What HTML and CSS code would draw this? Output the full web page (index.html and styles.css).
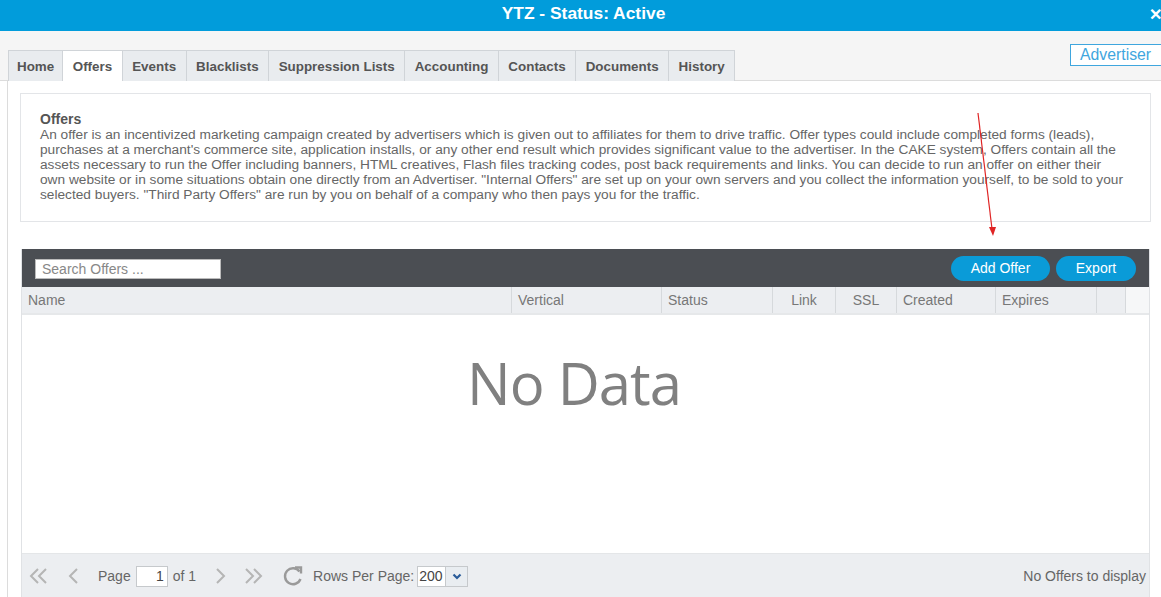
FILE: index.html
```html
<!DOCTYPE html>
<html lang="en">
<head>
    <meta charset="UTF-8">
    <title>YTZ - Status: Active</title>
    <link rel="stylesheet" href="styles.css">
</head>
<body>
    <div class="titlebar">
        <span class="title">YTZ - Status: Active</span>
        <span class="close">&#x2715;</span>
    </div>

    <div class="tabstrip">
        <ul class="tabs">
            <li class="tab">Home</li>
            <li class="tab active">Offers</li>
            <li class="tab">Events</li>
            <li class="tab">Blacklists</li>
            <li class="tab">Suppression Lists</li>
            <li class="tab">Accounting</li>
            <li class="tab">Contacts</li>
            <li class="tab">Documents</li>
            <li class="tab">History</li>
        </ul>
        <div class="role-box">Advertiser</div>
    </div>

    <div class="panel">
        <div class="intro">
            <h4>Offers</h4>
            <p>An offer is an incentivized marketing campaign created by advertisers which is given out to affiliates for them to drive traffic. Offer types could include completed forms (leads), purchases at a merchant's commerce site, application installs, or any other end result which provides significant value to the advertiser. In the CAKE system, Offers contain all the assets necessary to run the Offer including banners, HTML creatives, Flash files tracking codes, post back requirements and links. You can decide to run an offer on either their own website or in some situations obtain one directly from an Advertiser. "Internal Offers" are set up on your own servers and you collect the information yourself, to be sold to your selected buyers. "Third Party Offers" are run by you on behalf of a company who then pays you for the traffic.</p>
        </div>

        <div class="grid">
            <div class="grid-toolbar">
                <input class="search" type="text" placeholder="Search Offers ...">
                <div class="actions">
                    <button class="btn btn-add">Add Offer</button>
                    <button class="btn btn-export">Export</button>
                </div>
            </div>

            <div class="grid-head">
                <div class="col col-name">Name</div>
                <div class="col col-vertical">Vertical</div>
                <div class="col col-status">Status</div>
                <div class="col col-link center">Link</div>
                <div class="col col-ssl center">SSL</div>
                <div class="col col-created">Created</div>
                <div class="col col-expires">Expires</div>
                <div class="col col-blank"></div>
            </div>

            <div class="grid-body">
                <div class="no-data">No Data</div>
            </div>

            <div class="pager">
                <div class="pager-left">
                    <svg class="nav-icon first" width="22" height="20" viewBox="0 0 22 20"><polyline points="10,3 3,10 10,17" /><polyline points="18,3 11,10 18,17" /></svg>
                    <svg class="nav-icon prev" width="14" height="20" viewBox="0 0 14 20"><polyline points="11,3 4,10 11,17" /></svg>
                    <span class="pager-label">Page</span>
                    <input class="page-input" type="text" value="1">
                    <span class="pager-of">of 1</span>
                    <svg class="nav-icon next" width="14" height="20" viewBox="0 0 14 20"><polyline points="3,3 10,10 3,17" /></svg>
                    <svg class="nav-icon last" width="22" height="20" viewBox="0 0 22 20"><polyline points="4,3 11,10 4,17" /><polyline points="12,3 19,10 12,17" /></svg>
                    <svg class="refresh" width="22" height="22" viewBox="0 0 22 22"><path d="M17.5 6.5 A8 8 0 1 0 18.5 14" /><polyline points="13,2.5 19,2.5 19,8.5" /></svg>
                    <span class="pager-label rows-label">Rows Per Page:</span>
                    <div class="rows-select">
                        <span class="rows-value">200</span>
                        <span class="rows-btn"><svg width="10" height="7" viewBox="0 0 10 7"><polyline points="1.5,1.5 5,5 8.5,1.5" /></svg></span>
                    </div>
                </div>
                <div class="pager-info">No Offers to display</div>
            </div>
        </div>
    </div>

    <svg class="annotation" width="30" height="140" viewBox="0 0 30 140">
        <line x1="6" y1="2" x2="20" y2="118" />
        <polygon points="17,116 24,116 21,125" />
    </svg>
</body>
</html>
```

FILE: styles.css
```css
body {
    margin: 0;
    font-family: "Liberation Sans", Arial, sans-serif;
    color: #555;
    background-color: #fff;
    overflow: hidden;
    position: relative;
}

.titlebar {
    height: 31px;
    background-color: #019cdb;
    color: #fff;
    display: flex;
    align-items: center;
    justify-content: center;
    position: relative;
}

.title {
    font-size: 17.4px;
    font-weight: bold;
    margin-left: 6px;
    margin-top: -4px;
}

.close {
    position: absolute;
    right: -1px;
    top: 5px;
    font-size: 16px;
    font-weight: bold;
}

.tabstrip {
    height: 50px;
    background-color: #f5f5f5;
    border-bottom: 1px solid #dcdcdc;
    box-sizing: border-box;
    display: flex;
    padding-left: 8px;
}

.tabs {
    list-style: none;
    margin: 0;
    padding: 0;
    display: flex;
    align-self: flex-end;
    margin-bottom: -1px;
}

.tab {
    height: 31px;
    line-height: 31px;
    padding: 0 9.5px;
    font-size: 13.4px;
    font-weight: bold;
    color: #555;
    background-color: #e9ecef;
    border: 1px solid #d0d4d8;
    border-left: none;
    border-bottom: none;
    box-sizing: border-box;
}

.tab:first-child {
    border-left: 1px solid #d0d4d8;
    padding: 0 8px;
}

.tab.active {
    background-color: #fff;
}

.role-box {
    margin-left: auto;
    margin-top: 13px;
    align-self: flex-start;
    margin-right: -20px;
    width: 111px;
    height: 22px;
    line-height: 20px;
    border: 1px solid #3fa6de;
    background-color: #fff;
    color: #3fa6de;
    font-size: 15.8px;
    padding-left: 9px;
    box-sizing: border-box;
}

.panel {
    background-color: #fff;
    border-left: 1px solid #dcdcdc;
    margin-left: 7px;
    padding: 12px 10px 0 12px;
}

.intro {
    border: 1px solid #e3e5e8;
    padding: 18px 23px 19px 19px;
    font-size: 13.7px;
    line-height: 15px;
    color: #666;
}

.intro h4 {
    margin: 0;
    font-size: 14px;
    color: #555;
}

.intro p {
    margin: 0;
}

.grid {
    margin-top: 27px;
    border: 1px solid #e0e2e5;
    border-top: none;
    width: 1127px;
    margin-left: 1px;
}

.grid-toolbar {
    height: 38px;
    background-color: #4b4e53;
    display: flex;
    align-items: center;
    padding: 0 13px;
}

.search {
    width: 186px;
    height: 20px;
    box-sizing: border-box;
    border: 1px solid #bbb;
    padding: 0 6px;
    font-family: "Liberation Sans", Arial, sans-serif;
    font-size: 14px;
    color: #555;
    margin-top: 1px;
}

.search::placeholder {
    color: #888;
}

.actions {
    margin-left: auto;
    display: flex;
    gap: 6px;
}

.btn {
    height: 25px;
    border: none;
    border-radius: 13px;
    background-color: #0a9bd8;
    color: #fff;
    font-family: "Liberation Sans", Arial, sans-serif;
    font-size: 14px;
    padding: 0;
}

.btn-add {
    width: 99px;
}

.btn-export {
    width: 80px;
}

.grid-head {
    display: flex;
    height: 26px;
    background-color: #f6f7f8;
    border-bottom: 2px solid #e6e8ea;
}

.col {
    background-color: #eceef1;
    border-right: 1px solid #d6d9dc;
    font-size: 14px;
    color: #777;
    line-height: 26px;
    padding-left: 6px;
    box-sizing: border-box;
}

.col.center {
    text-align: center;
    padding-left: 0;
}

.col-name { width: 490px; }
.col-vertical { width: 150px; }
.col-status { width: 111px; }
.col-link { width: 63px; padding-left: 3px; }
.col-ssl { width: 61px; padding-left: 3px; }
.col-created { width: 99px; }
.col-expires { width: 101px; }
.col-blank { width: 29px; }

.grid-body {
    height: 238px;
    background-color: #fff;
    border-bottom: 1px solid #e4e6e8;
}

.no-data {
    width: 1104px;
    text-align: center;
    font-family: "Open Sans", "DejaVu Sans", sans-serif;
    font-size: 58px;
    letter-spacing: -1px;
    color: #808080;
    padding-top: 28px;
    line-height: 80px;
}

.pager {
    height: 44px;
    background-color: #eceef1;
    display: flex;
    align-items: center;
    padding: 0 3px 0 6px;
    font-size: 14px;
    color: #666;
}

.pager-left {
    display: flex;
    align-items: center;
}

.nav-icon polyline,
.rows-btn polyline {
    fill: none;
    stroke: #b5b5b5;
    stroke-width: 2;
}

.nav-icon.first { margin-right: 16px; }
.nav-icon.prev { margin-right: 18px; }
.nav-icon.next { margin-right: 14px; }
.nav-icon.last { margin-right: 18px; }

.refresh {
    margin-right: 9px;
}

.refresh path,
.refresh polyline {
    fill: none;
    stroke: #9a9a9a;
    stroke-width: 2.4;
}

.pager-label {
    margin-right: 5px;
}

.rows-label {
    margin-right: 3px;
}

.page-input {
    width: 32px;
    height: 21px;
    box-sizing: border-box;
    border: 1px solid #c6c9cc;
    text-align: right;
    padding: 0 3px;
    font-family: "Liberation Sans", Arial, sans-serif;
    font-size: 14px;
    color: #444;
    margin-right: 5px;
}

.pager-of {
    margin-right: 18px;
}

.rows-select {
    display: flex;
    height: 21px;
    border: 1px solid #c6c9cc;
    background-color: #fff;
    box-sizing: border-box;
}

.rows-value {
    width: 26px;
    line-height: 19px;
    color: #444;
    padding-left: 1px;
}

.rows-btn {
    width: 21px;
    background-color: #e9edf1;
    border-left: 1px solid #c6c9cc;
    display: flex;
    align-items: center;
    justify-content: center;
}

.rows-btn polyline {
    stroke: #2a5c9a;
    stroke-width: 2.2;
}

.pager-info {
    margin-left: auto;
    color: #666;
}

.annotation {
    position: absolute;
    left: 972px;
    top: 111px;
}

.annotation line {
    stroke: #e02424;
    stroke-width: 1.2;
}

.annotation polygon {
    fill: #e02424;
}
```
